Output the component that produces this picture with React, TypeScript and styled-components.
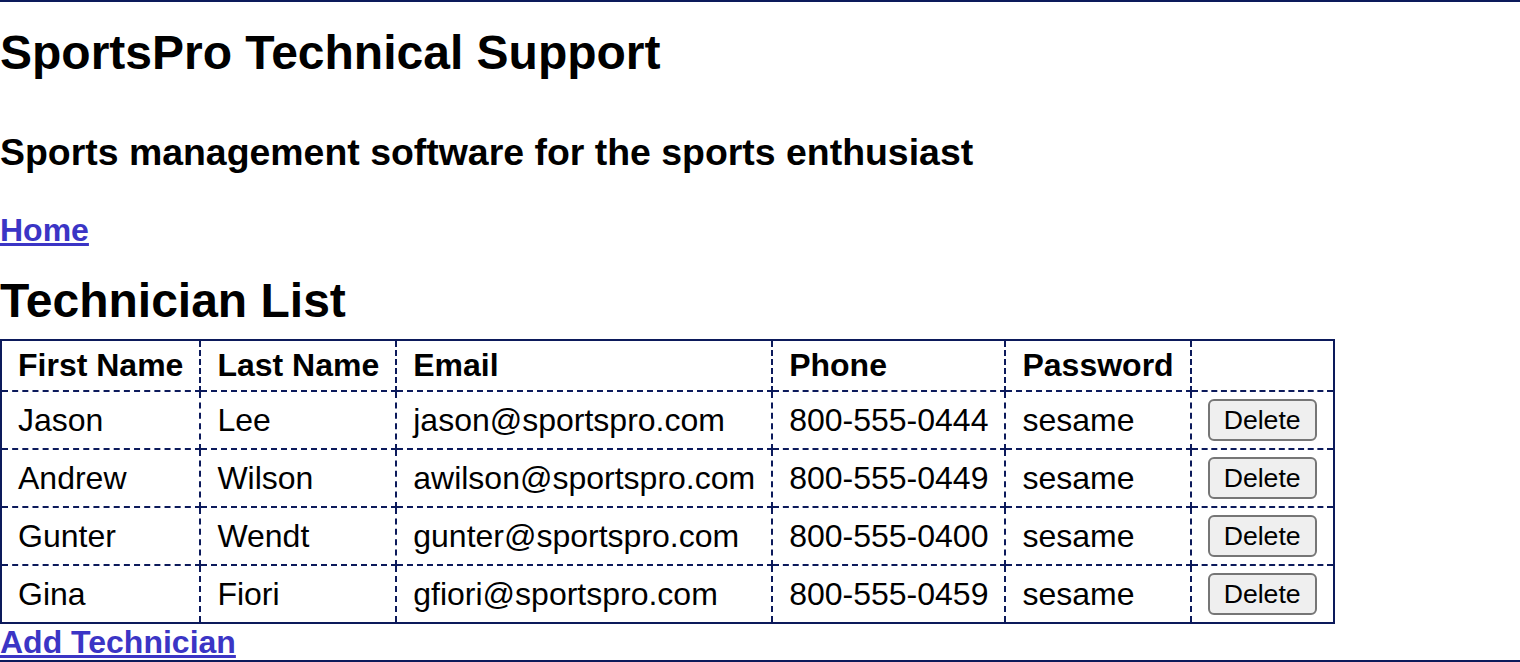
import React from "react";
import styled, { createGlobalStyle } from "styled-components";

const NAVY = "#0c1a5b";
const LINK = "#3b35c5";

const GlobalStyle = createGlobalStyle`
  body {
    margin: 0;
    background: #ffffff;
    color: #000000;
    font-family: "Liberation Sans", Arial, Helvetica, sans-serif;
  }
`;

const Page = styled.div`
  border-top: 2px solid ${NAVY};
`;

const SiteTitle = styled.h1`
  margin: 23px 0 0;
  font-size: 48px;
  line-height: 56px;
  font-weight: bold;
`;

const Tagline = styled.h2`
  margin: 50px 0 0;
  font-size: 37.44px;
  line-height: 43px;
  font-weight: bold;
`;

const Nav = styled.nav`
  margin-top: 38px;
  font-size: 32px;
  line-height: 37px;
  font-weight: bold;
`;

const TextLink = styled.a`
  color: ${LINK};
  text-decoration: underline;
  font-weight: bold;
  cursor: pointer;
`;

const SectionTitle = styled.h2`
  margin: 24px 0 10px;
  font-size: 48px;
  line-height: 56px;
  font-weight: bold;
`;

const Table = styled.table`
  border-collapse: collapse;
  border: 2px solid ${NAVY};
  font-size: 32px;
  line-height: 35px;
`;

const HeadCell = styled.th`
  padding: 7px 16px;
  border: 2px dashed ${NAVY};
  text-align: left;
  font-weight: bold;
  white-space: nowrap;
`;

const Cell = styled.td`
  padding: 7px 16px;
  border: 2px dashed ${NAVY};
  white-space: nowrap;
  vertical-align: middle;
`;

const DeleteButton = styled.button`
  display: block;
  height: 42px;
  padding: 0 14px;
  border: 2px solid #767676;
  border-radius: 6px;
  background: #efefef;
  color: #000000;
  font-family: inherit;
  font-size: 26.67px;
  line-height: 38px;
  cursor: pointer;
`;

const AddRow = styled.p`
  margin: 0;
  padding-top: 2px;
  font-size: 32px;
  line-height: 33px;
`;

const Footer = styled.footer`
  margin-top: 1px;
  border-top: 2px solid ${NAVY};
`;

interface Technician {
  first: string;
  last: string;
  email: string;
  phone: string;
  password: string;
}

const technicians: Technician[] = [
  { first: "Jason", last: "Lee", email: "jason@sportspro.com", phone: "800-555-0444", password: "sesame" },
  { first: "Andrew", last: "Wilson", email: "awilson@sportspro.com", phone: "800-555-0449", password: "sesame" },
  { first: "Gunter", last: "Wendt", email: "gunter@sportspro.com", phone: "800-555-0400", password: "sesame" },
  { first: "Gina", last: "Fiori", email: "gfiori@sportspro.com", phone: "800-555-0459", password: "sesame" },
];

const App: React.FC = () => {
  return (
    <Page>
      <GlobalStyle />
      <header>
        <SiteTitle>SportsPro Technical Support</SiteTitle>
        <Tagline>Sports management software for the sports enthusiast</Tagline>
        <Nav>
          <TextLink href="#">Home</TextLink>
        </Nav>
      </header>
      <main>
        <SectionTitle>Technician List</SectionTitle>
        <Table>
          <thead>
            <tr>
              <HeadCell>First Name</HeadCell>
              <HeadCell>Last Name</HeadCell>
              <HeadCell>Email</HeadCell>
              <HeadCell>Phone</HeadCell>
              <HeadCell>Password</HeadCell>
              <HeadCell>&nbsp;</HeadCell>
            </tr>
          </thead>
          <tbody>
            {technicians.map((t) => (
              <tr key={t.email}>
                <Cell>{t.first}</Cell>
                <Cell>{t.last}</Cell>
                <Cell>{t.email}</Cell>
                <Cell>{t.phone}</Cell>
                <Cell>{t.password}</Cell>
                <Cell>
                  <DeleteButton type="button">Delete</DeleteButton>
                </Cell>
              </tr>
            ))}
          </tbody>
        </Table>
        <AddRow>
          <TextLink href="#">Add Technician</TextLink>
        </AddRow>
      </main>
      <Footer />
    </Page>
  );
};

export default App;
